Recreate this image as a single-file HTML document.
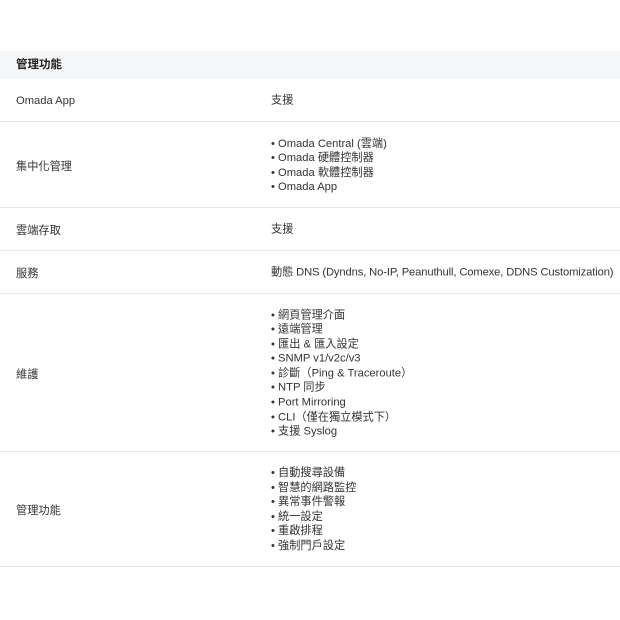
<!DOCTYPE html>
<html><head><meta charset="utf-8"><style>
body{margin:0;width:620px;height:620px;background:#fff;font-family:"Liberation Sans","Noto Sans CJK TC",sans-serif;font-size:11.2px;color:#333;position:relative;overflow:hidden}
.hd{position:absolute;left:0;top:51px;width:620px;height:28px;background:#f5f6f7;font-weight:bold;color:#222;font-size:11.5px;line-height:28px;padding-left:16px;box-sizing:border-box}
.row{position:absolute;left:0;width:620px;border-bottom:1px solid #e6e6e6;box-sizing:border-box}
.l{position:absolute;left:16px;top:50%;margin-top:1px;transform:translateY(-50%);white-space:nowrap}
.r{position:absolute;left:271px;top:50%;margin-top:1px;transform:translateY(-50%);white-space:nowrap;line-height:14.6px}
</style></head><body>
<div class="hd">管理功能</div>
<div class="row" style="top:79px;height:43px"><div class="l">Omada App</div><div class="r">支援</div></div>
<div class="row" style="top:122px;height:86px"><div class="l">集中化管理</div><div class="r">• Omada Central (雲端)<br>• Omada 硬體控制器<br>• Omada 軟體控制器<br>• Omada App</div></div>
<div class="row" style="top:208px;height:43px"><div class="l">雲端存取</div><div class="r">支援</div></div>
<div class="row" style="top:251px;height:43px"><div class="l">服務</div><div class="r" style="letter-spacing:-0.12px">動態 DNS (Dyndns, No-IP, Peanuthull, Comexe, DDNS Customization)</div></div>
<div class="row" style="top:294px;height:158px"><div class="l">維護</div><div class="r">• 網頁管理介面<br>• 遠端管理<br>• 匯出 &amp; 匯入設定<br>• SNMP v1/v2c/v3<br>• 診斷（Ping &amp; Traceroute）<br>• NTP 同步<br>• Port Mirroring<br>• CLI（僅在獨立模式下）<br>• 支援 Syslog</div></div>
<div class="row" style="top:452px;height:115px"><div class="l">管理功能</div><div class="r">• 自動搜尋設備<br>• 智慧的網路監控<br>• 異常事件警報<br>• 統一設定<br>• 重啟排程<br>• 強制門戶設定</div></div>
</body></html>
